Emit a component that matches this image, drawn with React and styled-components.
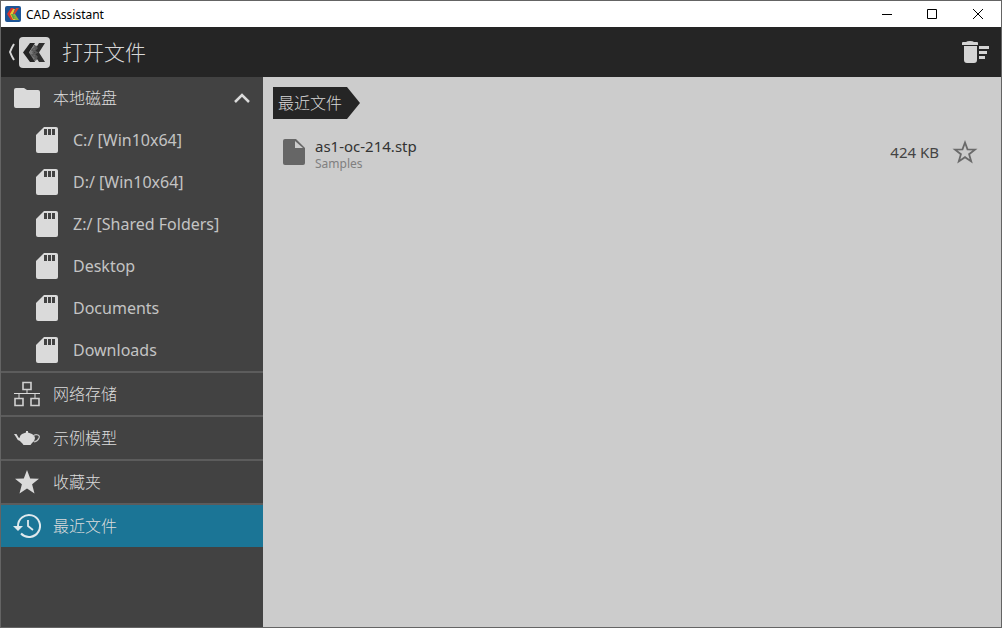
import React, { useState } from "react";
import styled, { createGlobalStyle } from "styled-components";

const drives = [
  "C:/ [Win10x64]",
  "D:/ [Win10x64]",
  "Z:/ [Shared Folders]",
  "Desktop",
  "Documents",
  "Downloads",
];

const files = [{ name: "as1-oc-214.stp", folder: "Samples", size: "424 KB" }];

const AppIcon = () => (
  <svg width="16" height="16" viewBox="0 0 16 16" aria-hidden="true">
    <rect width="16" height="16" rx="2" fill="#1d5596" />
    <path d="M6 2h3L6 8l3 6H6L2 8z" fill="#d8342c" />
    <path d="M8 3h2L8 8l3 6H8L5 8z" fill="#e8c832" />
    <path d="M11 2h3l-4 6H8z" fill="#d8442c" />
    <path d="M8 8h2l4 6h-3z" fill="#8cb83c" />
    <path d="M6 8h2l2 5H8z" fill="#5fa544" />
  </svg>
);

const LogoIcon = () => (
  <svg width="31" height="31" viewBox="0 0 31 31" aria-hidden="true">
    <rect width="31" height="31" rx="4" fill="#d4d4d4" />
    <path d="M15 8l4 3 2-1-3 6 3 5-2 1-4 3-5-9z" fill="#7a7a7a" />
    <path d="M11 6h5l-6 9.500 6 9.500h-5L4 15.500z" fill="#242424" />
    <path d="M20 6h6l-6 9.500 6 9.500h-6l-6-9.500z" fill="#303030" />
    <path
      d="M15 8l3 3-4 4.500 4 4.500-3 3M18 9l-5 4 5 2.500-5 2.500 5 4"
      fill="none"
      stroke="#5a5a5a"
      strokeWidth="1.400"
    />
  </svg>
);

const BackIcon = () => (
  <svg width="8" height="18" viewBox="0 0 8 18" aria-hidden="true">
    <path d="M7 1Q5 4 3 9q2 5 4 8" fill="none" stroke="#d8d8d8" strokeWidth="2" />
  </svg>
);

const ClearIcon = () => (
  <svg width="28" height="24" viewBox="0 0 28 24" aria-hidden="true">
    <path
      d="M1 3q0-1 1-1h3q1-1 4-1t4 1h3q1 0 1 1v2H1zM3 6h13v14q0 3-3 3H6q-3 0-3-3zM18 6h10v3H18zM18 11h8v3h-8zM18 16h6v3h-6z"
      fill="#d4d4d4"
    />
  </svg>
);

const FolderIcon = () => (
  <svg width="28" height="24" viewBox="0 0 28 24" aria-hidden="true">
    <path
      d="M3 2h8l3 2h11q2 0 2 2v14q0 2-2 2H3q-2 0-2-2V4q0-2 2-2z"
      fill="#dadada"
    />
  </svg>
);

const CardIcon = () => (
  <svg width="22" height="26" viewBox="0 0 22 26" aria-hidden="true">
    <path
      d="M8 0h12q2 0 2 2v22q0 2-2 2H2q-2 0-2-2V8z"
      fill="#dadada"
    />
    <path d="M8 2h3v6H8zM12 2h3v6h-3zM16 2h3v6h-3z" fill="#424242" />
  </svg>
);

const NetworkIcon = () => (
  <svg width="28" height="26" viewBox="0 0 28 26" aria-hidden="true">
    <path
      d="M10 1.500h8v7h-8zM2 17.500h8v7H2zM18 17.500h8v7h-8z"
      fill="none"
      stroke="#d0d0d0"
      strokeWidth="1.600"
    />
    <path d="M1 12.500h26M14 9v4M6 12v5M22 12v5" stroke="#dadada" />
  </svg>
);

const TeapotIcon = () => (
  <svg width="28" height="16" viewBox="0 0 28 16" aria-hidden="true">
    <path
      d="M1 4h2.500l2 3.500 1 .5Q7 5 9 4l4-1.500V1h2v1.500L19 4q3 1.500 3 4 0 3-3 5l-1.500 2h-7L9 13q-1-.5-2-2-3-1-4-4z"
      fill="#dadada"
    />
    <path
      d="M20 6q2-2 5-1 2 1 1 3-1 3-5 4"
      fill="none"
      stroke="#c4c4c4"
      strokeWidth="1.200"
    />
  </svg>
);

const StarIcon = ({ outline }) => (
  <svg width="26" height="26" viewBox="0 0 26 26" aria-hidden="true">
    {outline ? (
      <path
        d="M13 3.500l2.500 6.800 7.500.3-5.900 4.600 2.100 7.200-6.200-4.200-6.200 4.200 2.100-7.200L3 10.600l7.500-.3z"
        fill="none"
        stroke="#6a6a6a"
        strokeWidth="1.800"
      />
    ) : (
      <path
        d="M13 1l3.200 8.400 8.800.4-6.900 5.500 2.400 9.200L13 19.500l-7.500 5 2.400-9.200L1 9.800l8.800-.4z"
        fill="#dadada"
      />
    )}
  </svg>
);

const HistoryIcon = () => (
  <svg width="28" height="26" viewBox="0 0 28 26" aria-hidden="true">
    <path
      d="M5 13A11 11 0 1 1 8 20.500"
      fill="none"
      stroke="#dfe9ed"
      strokeWidth="2"
    />
    <path d="M0 13h10l-5 5z" fill="#dfe9ed" />
    <path d="M15 7v6l5 4" fill="none" stroke="#dfe9ed" strokeWidth="1.800" />
  </svg>
);

const FileIcon = () => (
  <svg width="22" height="26" viewBox="0 0 22 26" aria-hidden="true">
    <path
      d="M2 0h11l9 9v15q0 2-2 2H2q-2 0-2-2V2q0-2 2-2z"
      fill="#666"
    />
    <path d="M12 2v7h8z" fill="#ccc" />
  </svg>
);

const ChevronIcon = () => (
  <svg width="16" height="10" viewBox="0 0 16 10" aria-hidden="true">
    <path
      d="M1 9l7-7 7 7"
      fill="none"
      stroke="#dadada"
      strokeWidth="2.500"
    />
  </svg>
);

const places = [
  { id: "network", label: "网络存储", Icon: NetworkIcon },
  { id: "samples", label: "示例模型", Icon: TeapotIcon },
  { id: "favorites", label: "收藏夹", Icon: StarIcon },
  { id: "recent", label: "最近文件", Icon: HistoryIcon },
];

const App = () => {
  const [active, setActive] = useState("recent");
  const [open, setOpen] = useState(true);
  const current = places.find((place) => place.id === active);

  return (
    <Window>
      <GlobalStyle />
      <TitleBar>
        <AppIcon />
        <AppName>CAD Assistant</AppName>
        <WindowButton aria-label="Minimize">
          <svg width="12" height="12" viewBox="0 0 12 12">
            <path d="M2 6.500h10" stroke="#000" />
          </svg>
        </WindowButton>
        <WindowButton aria-label="Maximize">
          <svg width="12" height="12" viewBox="0 0 12 12">
            <path d="M1.500 1.500h9v9h-9z" fill="none" stroke="#000" />
          </svg>
        </WindowButton>
        <WindowButton aria-label="Close">
          <svg width="12" height="12" viewBox="0 0 12 12">
            <path d="M1 1l10 10M11 1L1 11" stroke="#000" />
          </svg>
        </WindowButton>
      </TitleBar>
      <Header>
        <BackButton aria-label="Back">
          <BackIcon />
          <LogoIcon />
        </BackButton>
        <Heading>打开文件</Heading>
        <IconButton aria-label="Clear recent files">
          <ClearIcon />
        </IconButton>
      </Header>
      <Body>
        <Sidebar>
          <Row aria-expanded={open} onClick={() => setOpen(!open)}>
            <RowIcon>
              <FolderIcon />
            </RowIcon>
            <RowLabel>本地磁盘</RowLabel>
            <ChevronIcon />
          </Row>
          {open &&
            drives.map((drive) => (
              <Row key={drive} $nested>
                <RowIcon>
                  <CardIcon />
                </RowIcon>
                <RowLabel $nested>{drive}</RowLabel>
              </Row>
            ))}
          {places.map(({ id, label, Icon }) => (
            <Section key={id}>
              <Row $active={id === active} onClick={() => setActive(id)}>
                <RowIcon>
                  <Icon />
                </RowIcon>
                <RowLabel>{label}</RowLabel>
              </Row>
            </Section>
          ))}
        </Sidebar>
        <Content>
          <Crumb href="#recent">{current.label}</Crumb>
          <FileList>
            {files.map((file) => (
              <FileRow key={file.name}>
                <FileIcon />
                <FileInfo>
                  <FileName>{file.name}</FileName>
                  <FileFolder>{file.folder}</FileFolder>
                </FileInfo>
                <FileSize>{file.size}</FileSize>
                <IconButton aria-label="Add to favorites">
                  <StarIcon outline />
                </IconButton>
              </FileRow>
            ))}
          </FileList>
        </Content>
      </Body>
    </Window>
  );
};

const GlobalStyle = createGlobalStyle`
  * {
    box-sizing: border-box;
  }
  body {
    margin: 0;
    font-family: "Noto Sans", "Noto Sans CJK SC", sans-serif;
    font-size: 16px;
  }
  button {
    border: 0;
    padding: 0;
    background: none;
    color: inherit;
    font: inherit;
    cursor: pointer;
  }
  svg {
    display: block;
    flex: none;
  }
`;

const Window = styled.div`
  display: flex;
  flex-direction: column;
  min-height: 100vh;
  border: 1px solid #646464;
`;

const TitleBar = styled.div`
  display: flex;
  align-items: center;
  height: 26px;
  padding-left: 4px;
  background: #fff;
`;

const AppName = styled.span`
  flex: 1;
  margin-left: 5px;
  font-size: 12px;
  color: #000;
`;

const WindowButton = styled.button`
  display: flex;
  align-items: center;
  justify-content: center;
  width: 46px;
  height: 26px;
`;

const Header = styled.header`
  display: flex;
  align-items: center;
  height: 50px;
  padding: 0 12px 0 6px;
  background: #252525;
  color: #d8d8d8;
`;

const BackButton = styled.button`
  display: flex;
  align-items: center;
  gap: 4px;
`;

const Heading = styled.h1`
  flex: 1;
  margin: 0 0 0 12px;
  font-size: 21px;
  font-weight: 300;
  line-height: 28px;
`;

const IconButton = styled.button`
  display: flex;
`;

const Body = styled.div`
  display: flex;
  flex: 1;
`;

const Sidebar = styled.nav`
  flex: 0 0 262px;
  background: #424242;
  color: #d0d0d0;
`;

const Section = styled.div`
  border-top: 2px solid #5c5c5c;
`;

const Row = styled.button`
  display: flex;
  align-items: center;
  width: 100%;
  height: 42px;
  padding: 0 13px 0 ${(props) => (props.$nested ? 32 : 12)}px;
  background: ${(props) => (props.$active ? "#1b7596" : "transparent")};
  font-weight: ${(props) => (props.$nested ? 400 : 300)};
  text-align: left;
`;

const RowIcon = styled.span`
  display: flex;
  justify-content: center;
  width: 28px;
`;

const RowLabel = styled.span`
  flex: 1;
  margin-left: 12px;
  padding-bottom: ${(props) => (props.$nested ? 0 : 2)}px;
  color: ${(props) => (props.$nested ? "#c4c4c4" : "#dcdcdc")};
`;

const Content = styled.main`
  flex: 1;
  padding: 10px;
  background: #ccc;
`;

const Crumb = styled.a`
  display: inline-flex;
  align-items: center;
  height: 32px;
  padding: 0 18px 2px 5px;
  background: #252525;
  clip-path: polygon(0 0, calc(100% - 13px) 0, 100% 50%, calc(100% - 13px) 100%, 0 100%);
  color: #d8d8d8;
  font-weight: 300;
  text-decoration: none;
`;

const FileList = styled.ul`
  margin: 12px 0 0;
  padding: 0;
  list-style: none;
`;

const FileRow = styled.li`
  display: flex;
  align-items: center;
  height: 42px;
  padding: 0 13px 0 10px;
`;

const FileInfo = styled.div`
  flex: 1;
  margin-left: 10px;
  padding-top: 4px;
`;

const FileName = styled.div`
  color: #333;
  font-size: 15px;
  line-height: 20px;
`;

const FileFolder = styled.div`
  color: #808080;
  font-size: 12px;
  line-height: 16px;
`;

const FileSize = styled.span`
  margin-right: 13px;
  color: #444;
  font-size: 15px;
`;

export default App;
